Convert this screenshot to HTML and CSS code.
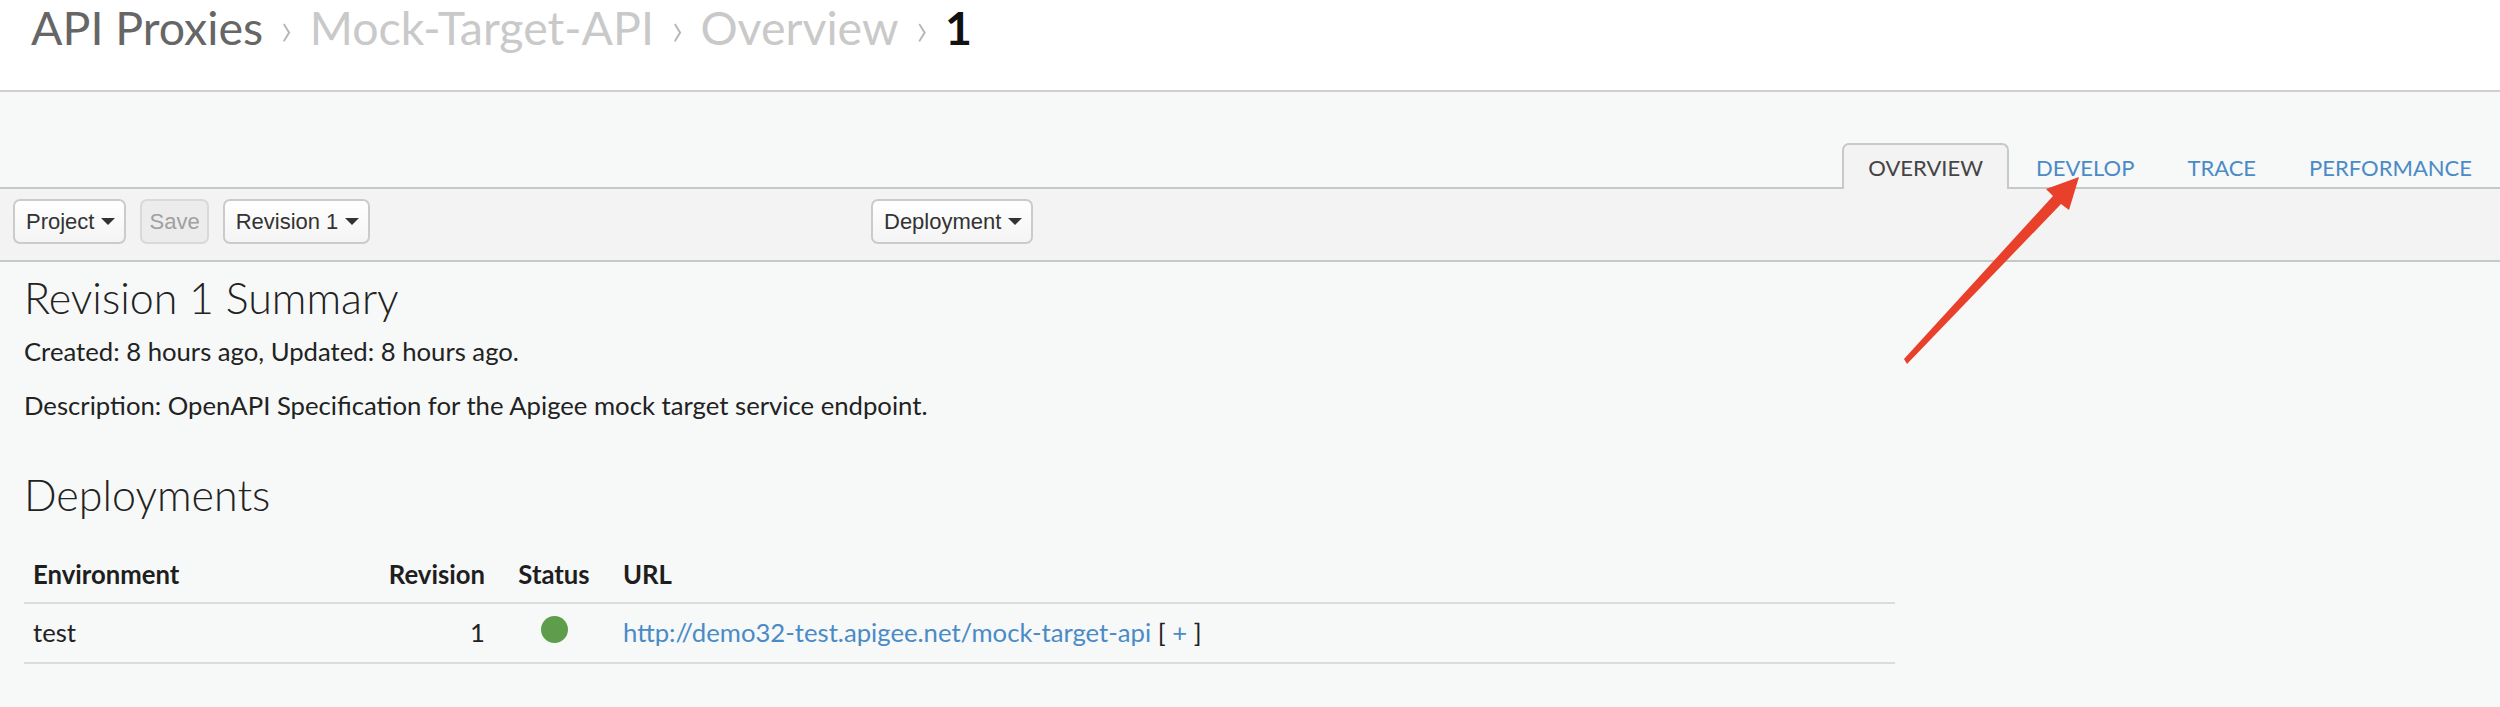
FILE: index.html
```html
<!DOCTYPE html>
<html lang="en">
<head>
<meta charset="utf-8">
<title>Mock-Target-API Overview</title>
<link rel="stylesheet" href="styles.css">
</head>
<body>
<header class="topbar">
  <nav class="crumbs">
    <span class="crumb crumb-root">API Proxies</span>
    <span class="sep">›</span>
    <span class="crumb crumb-muted">Mock-Target-API</span>
    <span class="sep">›</span>
    <span class="crumb crumb-muted">Overview</span>
    <span class="sep">›</span>
    <span class="crumb crumb-current">1</span>
  </nav>
</header>

<div class="tabs-row">
  <ul class="tabs">
    <li class="tab tab-active">OVERVIEW</li>
    <li class="tab">DEVELOP</li>
    <li class="tab">TRACE</li>
    <li class="tab">PERFORMANCE</li>
  </ul>
</div>

<div class="toolbar">
  <div class="tool-group tool-left">
    <button class="btn">Project <span class="caret"></span></button>
    <button class="btn btn-disabled">Save</button>
    <button class="btn">Revision 1 <span class="caret"></span></button>
  </div>
  <div class="tool-group">
    <button class="btn">Deployment <span class="caret"></span></button>
  </div>
</div>

<main class="content">
  <h2 class="heading heading-first">Revision 1 Summary</h2>
  <p class="meta">Created: 8 hours ago, Updated: 8 hours ago.</p>
  <p class="desc">Description: OpenAPI Specification for the Apigee mock target service endpoint.</p>

  <h2 class="heading heading-deploy">Deployments</h2>
  <table class="deploy-table">
    <colgroup>
      <col class="col-env">
      <col class="col-rev">
      <col class="col-status">
      <col class="col-url">
    </colgroup>
    <thead>
      <tr>
        <th class="c-left">Environment</th>
        <th class="c-right">Revision</th>
        <th class="c-center">Status</th>
        <th class="c-left">URL</th>
      </tr>
    </thead>
    <tbody>
      <tr>
        <td class="c-left">test</td>
        <td class="c-right">1</td>
        <td class="c-center"><span class="dot"></span></td>
        <td class="c-left"><a class="link" href="#">http://demo32-test.apigee.net/mock-target-api</a> [ <a class="link" href="#">+</a> ]</td>
      </tr>
    </tbody>
  </table>
</main>

<svg class="annotation-arrow" width="2500" height="707" viewBox="0 0 2500 707" aria-hidden="true">
  <polygon points="2079,177 2046,189 2053,196 1904,359 1907,364 2061,204 2069,210" fill="#e8402a"/>
</svg>
</body>
</html>
```

FILE: styles.css
```css
* { box-sizing: border-box; }

html, body {
  margin: 0;
  padding: 0;
}

body {
  width: 2500px;
  height: 707px;
  overflow: hidden;
  background: #f7f8f8;
  font-family: "Lato", "Open Sans", sans-serif;
  color: #222;
  position: relative;
}

/* ---------- top bar ---------- */
.topbar {
  height: 92px;
  background: #ffffff;
  border-bottom: 2px solid #cfcfcf;
  padding-left: 31px;
}

.crumbs {
  display: flex;
  align-items: baseline;
  font-size: 46.5px;
  line-height: 54px;
}

.crumb-root { color: #666666; }
.crumb-muted { color: #c9c9c9; }
.crumb-current { color: #111111; font-weight: 700; }

.sep {
  color: #b0b0b0;
  font-weight: 300;
  margin: 0 17px;
}

/* ---------- tabs ---------- */
.tabs-row {
  height: 97px;
  display: flex;
  justify-content: flex-end;
  align-items: flex-end;
  border-bottom: 2px solid #c8c8c8;
  padding-right: 2px;
}

.tabs {
  list-style: none;
  margin: 0 0 -2px 0;
  padding: 0;
  display: flex;
  gap: 1px;
}

.tab {
  height: 46px;
  padding: 0 24px;
  font-size: 22px;
  line-height: 46px;
  color: #4a8bc6;
  border: 2px solid transparent;
  border-bottom: none;
  border-radius: 7px 7px 0 0;
}

.tab-active {
  color: #444444;
  background: #f3f3f3;
  border-color: #c8c8c8;
}

/* ---------- toolbar ---------- */
.toolbar {
  height: 73px;
  background: #f3f3f3;
  border-bottom: 2px solid #c8c8c8;
  display: flex;
  align-items: flex-start;
  padding: 10px 0 0 13px;
}

.tool-group {
  display: flex;
  gap: 14px;
}

.tool-left {
  width: 858px;
}

.btn {
  height: 45px;
  padding: 0 9px 0 11px;
  font-family: "Liberation Sans", Arial, sans-serif;
  font-size: 22px;
  color: #333333;
  background: linear-gradient(#ffffff, #f4f4f4);
  border: 2px solid #cbcbcb;
  border-radius: 7px;
  display: flex;
  align-items: center;
  gap: 7px;
}

.btn-disabled {
  color: #a0a0a0;
  background: #ececec;
  border-color: #d9d9d9;
  padding: 0 7px;
}

.caret {
  width: 0;
  height: 0;
  border-top: 7px solid #333333;
  border-left: 7px solid transparent;
  border-right: 7px solid transparent;
}

/* ---------- content ---------- */
.content {
  padding-left: 24px;
}

.heading {
  margin: 0;
  font-weight: 300;
  font-size: 43px;
  line-height: 46px;
  color: #222;
}

.heading-first { margin-top: 13px; }
.heading-deploy { margin-top: 49px; }

.meta, .desc {
  margin: 0;
  font-size: 25.7px;
  line-height: 36px;
  color: #222;
}

.meta { margin-top: 12px; }
.desc { margin-top: 18px; }

/* ---------- table ---------- */
.deploy-table {
  margin-top: 26px;
  width: 1871px;
  border-collapse: collapse;
  table-layout: fixed;
  font-size: 25.7px;
  line-height: 36px;
}

.col-env { width: 340px; }
.col-rev { width: 130px; }
.col-status { width: 120px; }

.deploy-table th {
  font-weight: 700;
  color: #1e1e1e;
  padding: 12px 9px 10px;
  border-bottom: 2px solid #dcdcdc;
}

.deploy-table td {
  color: #222;
  padding: 10px 9px 12px;
  border-bottom: 2px solid #dcdcdc;
}

.c-left { text-align: left; }
.c-right { text-align: right; }
.c-center { text-align: center; }

.dot {
  display: inline-block;
  width: 27px;
  height: 27px;
  border-radius: 50%;
  background: #5e9d4b;
  vertical-align: -1px;
}

.link {
  color: #4a8bc6;
  text-decoration: none;
}

/* ---------- annotation ---------- */
.annotation-arrow {
  position: absolute;
  top: 0;
  left: 0;
  pointer-events: none;
}
```
